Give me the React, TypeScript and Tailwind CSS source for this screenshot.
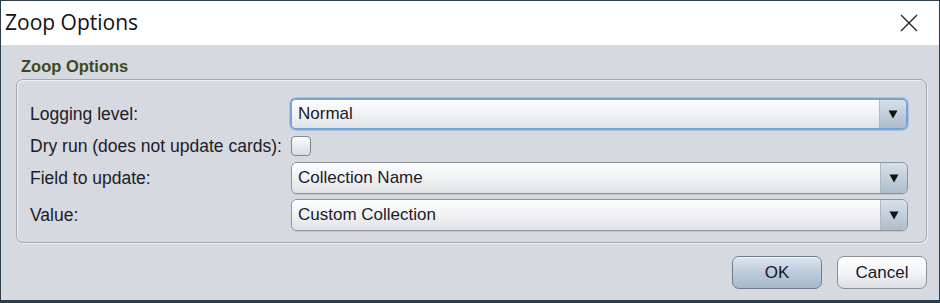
import React from "react";

const font = { fontFamily: '"Liberation Sans", Arial, sans-serif' };

function Combo({ value, focused }: { value: string; focused?: boolean }) {
  return (
    <div
      className={`flex h-[32px] flex-1 items-stretch overflow-hidden rounded-[6px] ${
        focused
          ? "border-2 border-[#78a2d2] shadow-[0_0_0_1px_#a9c4e4]"
          : "border border-[#8d939b] shadow-[0_1px_0_#c5c9cf]"
      }`}
    >
      <div className="flex flex-1 items-center bg-gradient-to-b from-[#fdfdfe] via-[#f1f2f4] to-[#dfe2e6] pl-[6px] text-[17px] text-[#1b1b2a]">
        {value}
      </div>
      <div className="flex w-[27px] items-center justify-center border-l border-[#aeb7c2] bg-gradient-to-b from-[#d8e1ea] via-[#c2cedb] to-[#aebdcd]">
        <svg width="10" height="9" viewBox="0 0 10 9">
          <path d="M0.5 0.5 L9.5 0.5 L5 8.5 Z" fill="#111" />
        </svg>
      </div>
    </div>
  );
}

export default function App() {
  return (
    <div
      style={font}
      className="flex h-[303px] w-[940px] flex-col overflow-hidden border-x border-t border-b-[3px] border-[#2e3d4c] bg-[#d6d9df]"
    >
      {/* title bar */}
      <div className="flex h-[44px] shrink-0 items-center justify-between bg-white pl-[4px] pr-[21px]">
        <span
          className="text-[21px] text-[#111]"
          style={{ fontFamily: '"Open Sans", "Noto Sans", sans-serif' }}
        >
          Zoop Options
        </span>
        <svg width="18" height="18" viewBox="0 0 18 18">
          <path d="M1 1 L17 17 M17 1 L1 17" stroke="#222" strokeWidth="1.3" />
        </svg>
      </div>

      <div className="flex flex-1 flex-col pl-[15px] pr-[12px]">
        <div className="pl-[5px] pt-[11px] text-[16.5px] font-bold leading-[20px] text-[#3d4a1e]">
          Zoop Options
        </div>
        <div className="mt-[3px] flex h-[164px] flex-col gap-[5px] rounded-[7px] border border-[#a3a9b1] pb-[12px] pl-[13px] pr-[18px] pt-[18px] shadow-[inset_1px_1px_0_#eef0f3,1px_1px_0_#eef0f3]">
          <div className="flex items-center">
            <div className="w-[260px] text-[17.5px] text-[#1c1c28]">Logging level:</div>
            <Combo value="Normal" focused />
          </div>
          <div className="flex h-[22px] items-center">
            <div className="w-[261px] text-[17.5px] text-[#1c1c28]">Dry run (does not update cards):</div>
            <div className="h-[20px] w-[20px] rounded-[4px] border border-[#7f858d] bg-gradient-to-b from-[#fafbfc] to-[#d9dde2]" />
          </div>
          <div className="flex items-center">
            <div className="w-[261px] text-[17.5px] text-[#1c1c28]">Field to update:</div>
            <Combo value="Collection Name" />
          </div>
          <div className="flex items-center">
            <div className="w-[261px] text-[17.5px] text-[#1c1c28]">Value:</div>
            <Combo value="Custom Collection" />
          </div>
        </div>

        <div className="mt-[13px] flex justify-end gap-[15px]">
          <button className="h-[33px] w-[90px] rounded-[7px] border border-[#6f7c8b] bg-gradient-to-b from-[#dfe7ef] via-[#bccbdb] to-[#a6b9cc] text-[17px] text-[#16162a] shadow-[inset_0_1px_0_#f3f6f9]">
            OK
          </button>
          <button className="h-[33px] w-[90px] rounded-[7px] border border-[#8a9098] bg-gradient-to-b from-[#ffffff] via-[#f3f4f6] to-[#dcdfe4] text-[17px] text-[#16162a]">
            Cancel
          </button>
        </div>
      </div>
    </div>
  );
}
